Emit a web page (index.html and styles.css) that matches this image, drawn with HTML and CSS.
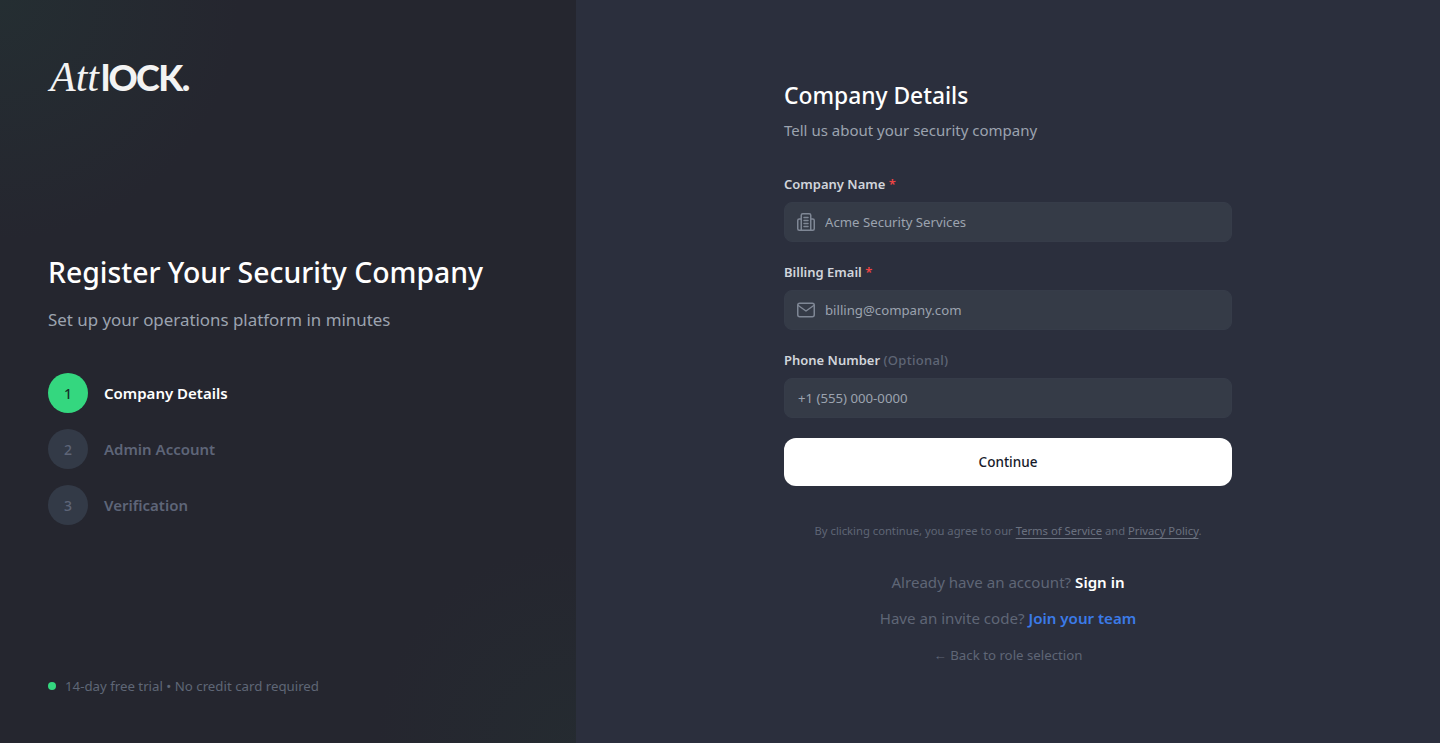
FILE: index.html
```html
<!DOCTYPE html>
<html lang="en">
<head>
    <meta charset="UTF-8">
    <meta name="viewport" content="width=device-width, initial-scale=1.0">
    <title>Register - AttLOCK</title>
    <link rel="stylesheet" href="styles.css">
</head>
<body>
    <div class="page">
        <aside class="side">
            <div class="logo"><span class="logo-att">Att</span><span class="logo-lock">lOCK.</span></div>

            <div class="intro">
                <h1>Register Your Security Company</h1>
                <p class="intro-sub">Set up your operations platform in minutes</p>
                <ol class="steps">
                    <li class="step active"><span class="step-num">1</span><span class="step-name">Company Details</span></li>
                    <li class="step"><span class="step-num">2</span><span class="step-name">Admin Account</span></li>
                    <li class="step"><span class="step-num">3</span><span class="step-name">Verification</span></li>
                </ol>
            </div>

            <div class="trial"><span class="trial-dot"></span>14-day free trial • No credit card required</div>
        </aside>

        <main class="content">
            <form class="form">
                <h2>Company Details</h2>
                <p class="form-sub">Tell us about your security company</p>

                <div class="field">
                    <label class="label" for="company">Company Name <span class="req">*</span></label>
                    <div class="input-wrap">
                        <svg class="input-icon" viewBox="0 0 18 18" fill="none" stroke="currentColor" stroke-width="1.5" stroke-linecap="round" stroke-linejoin="round">
                            <path d="M4.250 17V2.250A1.500 1.500 0 0 1 5.750 .750h6.500a1.500 1.500 0 0 1 1.500 1.500V17"/>
                            <path d="M4.250 6H2.250A1.500 1.500 0 0 0 .750 7.500v8.250a1.500 1.500 0 0 0 1.500 1.500h13.500a1.500 1.500 0 0 0 1.500-1.500V7.500A1.500 1.500 0 0 0 15.750 6h-2"/>
                            <path d="M7 4.500h4M7 7.500h4M7 10.500h4M7 13.500h4"/>
                        </svg>
                        <input id="company" class="input" type="text" placeholder="Acme Security Services">
                    </div>
                </div>

                <div class="field">
                    <label class="label" for="email">Billing Email <span class="req">*</span></label>
                    <div class="input-wrap">
                        <svg class="input-icon" viewBox="0 0 18 18" fill="none" stroke="currentColor" stroke-width="1.5" stroke-linecap="round" stroke-linejoin="round">
                            <rect x=".750" y="2.250" width="16.500" height="13.500" rx="2"/>
                            <path d="M1.250 4.500L9 10l7.750-5.500"/>
                        </svg>
                        <input id="email" class="input" type="text" placeholder="billing@company.com">
                    </div>
                </div>

                <div class="field">
                    <label class="label" for="phone">Phone Number <span class="optional">(Optional)</span></label>
                    <div class="input-wrap">
                        <input id="phone" class="input no-icon" type="text" placeholder="+1 (555) 000-0000">
                    </div>
                </div>

                <button class="submit" type="button">Continue</button>

                <p class="terms">By clicking continue, you agree to our <a href="#">Terms of Service</a> and <a href="#">Privacy Policy</a>.</p>
                <p class="alt first">Already have an account? <a class="signin" href="#">Sign in</a></p>
                <p class="alt">Have an invite code? <a class="join" href="#">Join your team</a></p>
                <a class="back" href="#">← Back to role selection</a>
            </form>
        </main>
    </div>
</body>
</html>
```

FILE: styles.css
```css
* {
    box-sizing: border-box;
}
body {
    margin: 0;
    font-family: "Noto Sans", "Open Sans", sans-serif;
    background-color: #2b2f3d;
    color: #ffffff;
}
.page {
    display: grid;
    grid-template-columns: 576px 1fr;
    height: 743px;
    overflow: hidden;
}

/* left panel */
.side {
    display: flex;
    flex-direction: column;
    padding: 48px 48px 47px;
    background:
        radial-gradient(circle at 0 0, rgba(36, 56, 54, 0.45), rgba(36, 56, 54, 0) 240px),
        radial-gradient(circle at 100% 100%, rgba(36, 54, 52, 0.3), rgba(36, 54, 52, 0) 200px),
        #25262f;
}
.logo {
    height: 60px;
    margin-left: 2px;
    line-height: 58px;
    color: #f3f3f3;
    white-space: nowrap;
}
.logo-att {
    font-family: "Liberation Serif", serif;
    font-style: italic;
    font-size: 42px;
}
.logo-lock {
    margin-left: 2px;
    font-family: "Lato", sans-serif;
    font-weight: 900;
    font-size: 36px;
    letter-spacing: -1.500px;
}
.intro {
    margin-top: 145px;
}
h1 {
    margin: 0;
    font-size: 28.400px;
    line-height: 38px;
    font-weight: 500;
}
.intro-sub {
    margin: 17px 0 0;
    font-size: 16.900px;
    line-height: 24px;
    color: #9ca3af;
}
.steps {
    list-style: none;
    margin: 41px 0 0;
    padding: 0;
    display: flex;
    flex-direction: column;
    gap: 16px;
}
.step {
    display: flex;
    align-items: center;
    gap: 16px;
    color: #5e6578;
    font-size: 15px;
    font-weight: 600;
}
.step-num {
    display: flex;
    align-items: center;
    justify-content: center;
    width: 40px;
    height: 40px;
    border-radius: 50%;
    background: #333a47;
    font-size: 14px;
    font-weight: 500;
}
.step.active {
    color: #ffffff;
}
.step.active .step-num {
    background: #34d77f;
    color: #16302a;
}
.trial {
    display: flex;
    align-items: center;
    gap: 9px;
    margin-top: auto;
    font-size: 13.250px;
    line-height: 20px;
    color: #5f6676;
}
.trial-dot {
    width: 8px;
    height: 8px;
    border-radius: 50%;
    background: #34d77f;
}

/* right panel */
.content {
    display: flex;
    justify-content: center;
    padding-top: 78px;
}
.form {
    display: flex;
    flex-direction: column;
    width: 448px;
}
h2 {
    margin: 0;
    font-size: 22.800px;
    line-height: 36px;
    font-weight: 500;
}
.form-sub {
    margin: 4px 0 0;
    font-size: 15px;
    line-height: 24px;
    color: #9ca3af;
}
.field {
    margin-top: 20px;
}
.form-sub + .field {
    margin-top: 32px;
}
.label {
    display: block;
    margin-bottom: 8px;
    font-size: 13px;
    line-height: 20px;
    font-weight: 600;
    color: #d1d5db;
}
.req {
    color: #ef4444;
}
.optional {
    font-weight: 500;
    letter-spacing: 0.300px;
    color: #5f6676;
}
.input-wrap {
    display: flex;
    align-items: center;
    gap: 10px;
    height: 40px;
    padding: 0 14px 0 12px;
    background: #353b47;
    border: 1px solid #363c49;
    border-radius: 8px;
}
.input-icon {
    flex: none;
    width: 18px;
    height: 18px;
    color: #7f8795;
}
.input {
    flex: 1;
    min-width: 0;
    padding: 0;
    border: none;
    outline: none;
    background: transparent;
    font-family: inherit;
    font-size: 13.200px;
    color: #ffffff;
}
.input.no-icon {
    padding-left: 1px;
}
.input::placeholder {
    color: #9ca3af;
    opacity: 1;
}
.submit {
    height: 48px;
    margin-top: 20px;
    border: none;
    border-radius: 12px;
    background: #ffffff;
    color: #16192a;
    font-family: inherit;
    font-size: 13.500px;
    font-weight: 500;
    cursor: pointer;
}
.terms {
    margin: 35px 0 0;
    text-align: center;
    font-size: 11.240px;
    line-height: 20px;
    color: #5f6676;
}
.terms a {
    color: #6b7280;
    text-decoration: underline;
    text-decoration-thickness: 1px;
    text-underline-offset: 3px;
}
.alt {
    margin: 0;
    padding-top: 12px;
    text-align: center;
    font-size: 15.100px;
    line-height: 24px;
    color: #5f6676;
}
.alt.first {
    padding-top: 29px;
}
.alt a {
    font-weight: 600;
    text-decoration: none;
}
.signin {
    color: #ffffff;
}
.join {
    color: #3b7be8;
}
.back {
    margin-top: 15px;
    text-align: center;
    font-size: 13.250px;
    line-height: 20px;
    color: #5f6676;
    text-decoration: none;
}
```
